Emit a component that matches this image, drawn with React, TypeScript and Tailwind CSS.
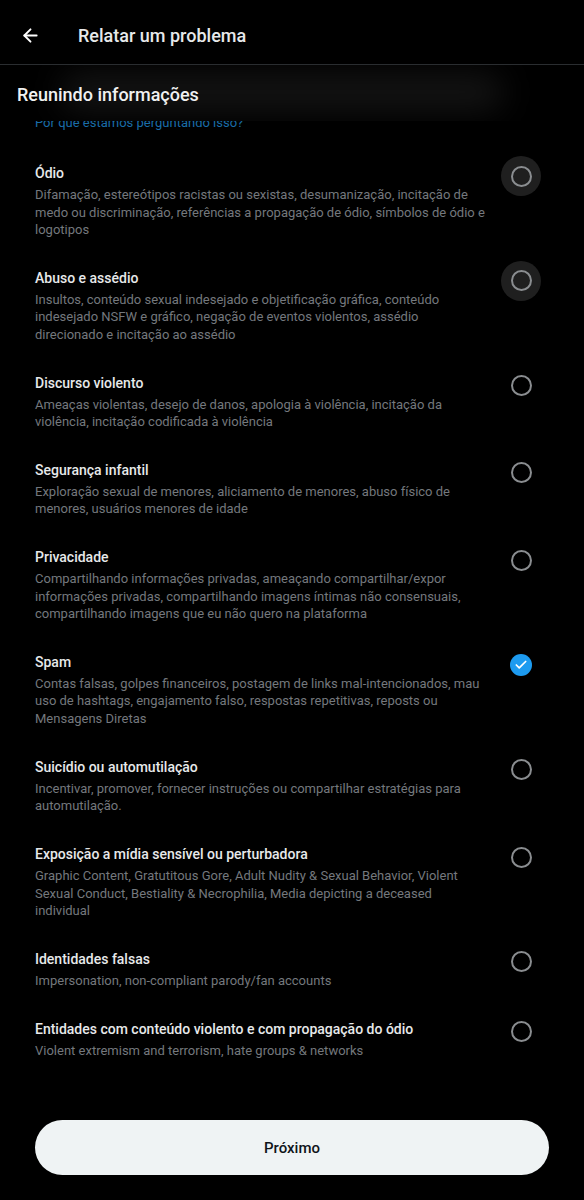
import { ArrowLeft, Check } from 'lucide-react'

const REASONS = [
  {
    title: 'Ódio',
    desc: 'Difamação, estereótipos racistas ou sexistas, desumanização, incitação de medo ou discriminação, referências a propagação de ódio, símbolos de ódio e logotipos',
    halo: true,
  },
  {
    title: 'Abuso e assédio',
    desc: 'Insultos, conteúdo sexual indesejado e objetificação gráfica, conteúdo indesejado NSFW e gráfico, negação de eventos violentos, assédio direcionado e incitação ao assédio',
    halo: true,
  },
  {
    title: 'Discurso violento',
    desc: 'Ameaças violentas, desejo de danos, apologia à violência, incitação da violência, incitação codificada à violência',
  },
  {
    title: 'Segurança infantil',
    desc: 'Exploração sexual de menores, aliciamento de menores, abuso físico de menores, usuários menores de idade',
  },
  {
    title: 'Privacidade',
    desc: 'Compartilhando informações privadas, ameaçando compartilhar/expor informações privadas, compartilhando imagens íntimas não consensuais, compartilhando imagens que eu não quero na plataforma',
  },
  {
    title: 'Spam',
    desc: 'Contas falsas, golpes financeiros, postagem de links mal-intencionados, mau uso de hashtags, engajamento falso, respostas repetitivas, reposts ou Mensagens Diretas',
    checked: true,
  },
  {
    title: 'Suicídio ou automutilação',
    desc: 'Incentivar, promover, fornecer instruções ou compartilhar estratégias para automutilação.',
  },
  {
    title: 'Exposição a mídia sensível ou perturbadora',
    desc: 'Graphic Content, Gratutitous Gore, Adult Nudity & Sexual Behavior, Violent Sexual Conduct, Bestiality & Necrophilia, Media depicting a deceased individual',
  },
  {
    title: 'Identidades falsas',
    desc: 'Impersonation, non-compliant parody/fan accounts',
  },
  {
    title: 'Entidades com conteúdo violento e com propagação do ódio',
    desc: 'Violent extremism and terrorism, hate groups & networks',
  },
]

export default function App() {
  return (
    <div className="min-h-[1200px] w-[584px] bg-black text-[#e7e9ea] font-['Roboto',sans-serif]">
      {/* top bar */}
      <div className="h-[65px] flex items-center border-b border-[#2a2d30]">
        <div className="w-[78px] pl-[20px] pt-[7px] flex items-center">
          <ArrowLeft size={21} strokeWidth={2.2} className="text-white" />
        </div>
        <p className="pt-[7px] text-[18px] font-medium text-[#e7e9ea]">Relatar um problema</p>
      </div>

      {/* section header over scrolled content */}
      <div className="relative">
        <p className="pt-[49px] pb-[15px] pl-[35px] text-[13px] leading-[18px] text-[#1a6da8]">
          Por que estamos perguntando isso?
        </p>
        <div className="absolute inset-x-0 top-0 h-[56px] bg-black overflow-hidden">
          <div className="absolute left-[60px] right-[80px] top-[8px] h-[38px] rounded-full bg-[#141414] blur-lg" />
          <p className="relative pt-[18px] pl-[17px] text-[18px] leading-[24px] font-medium text-[#f0f1f1]">
            Reunindo informações
          </p>
        </div>
      </div>

      {/* reasons */}
      <div>
        {REASONS.map(r => (
          <div key={r.title} className="flex items-start pl-[35px] pr-[43px] pt-4 pb-[13.3px]">
            <div className="flex-1 pr-[13px]">
              <p className="text-[14px] leading-5 font-medium text-[#e7e9ea]">{r.title}</p>
              <p className="mt-[3px] text-[13px] leading-[17.5px] text-[#74787d]">{r.desc}</p>
            </div>
            <div className={`w-10 h-10 -mt-[7px] rounded-full flex items-center justify-center ${r.halo ? 'bg-[#1f1f1f]' : ''}`}>
              {r.checked ? (
                <div className="w-[22px] h-[22px] rounded-full bg-[#1d9bf0] flex items-center justify-center">
                  <Check size={14} strokeWidth={3} className="text-white" />
                </div>
              ) : (
                <div className="w-[21px] h-[21px] rounded-full border-2 border-[#8a8d90]" />
              )}
            </div>
          </div>
        ))}
      </div>

      {/* next */}
      <div className="px-[35px] pt-[48px] pb-6">
        <button className="w-full h-[55px] rounded-full bg-[#eff3f4] text-[#0f1419] text-[15px] font-medium">
          Próximo
        </button>
      </div>
    </div>
  )
}
